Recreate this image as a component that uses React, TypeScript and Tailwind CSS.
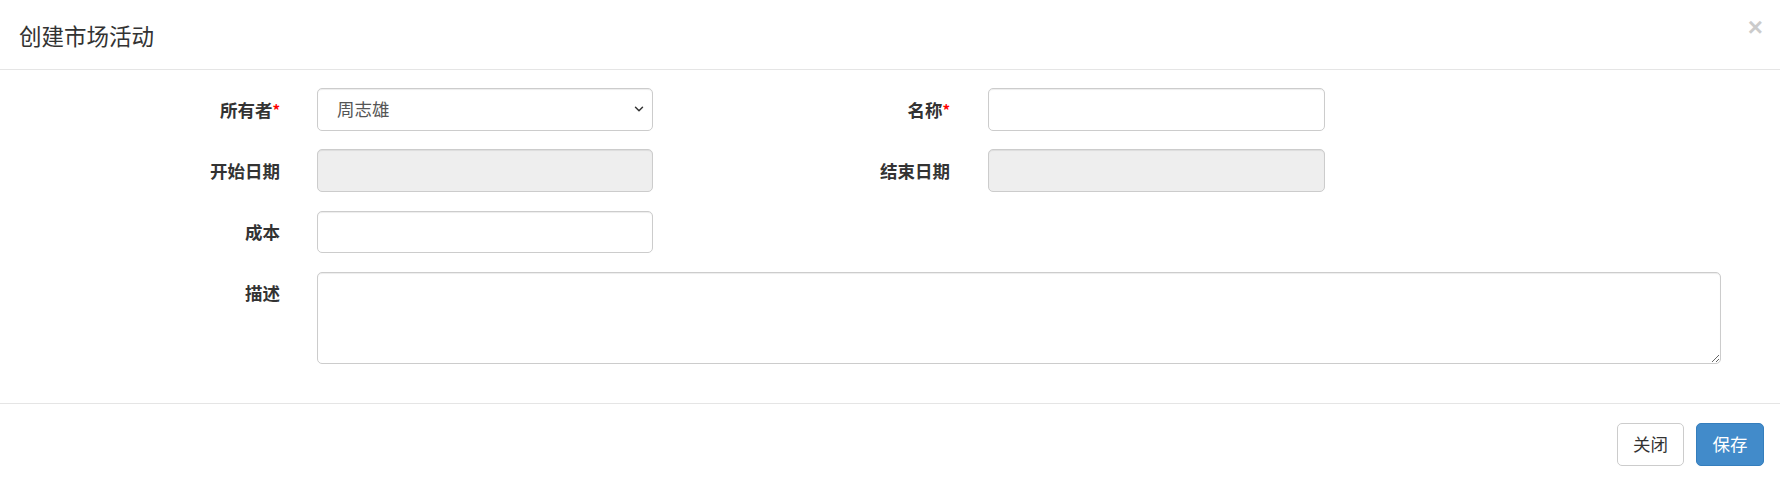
import { ChevronDown } from "lucide-react";

const font = "font-['Microsoft_YaHei','Noto_Sans_CJK_SC',sans-serif]";

const inputCls =
  "h-[42.5px] rounded-[5px] border border-[#ccc] bg-white px-[15px] text-[17.5px] text-[#555] shadow-[inset_0_1px_1px_rgba(0,0,0,0.075)] outline-none";

const Label = ({ text, required, width }: { text: string; required?: boolean; width: string }) => (
  <label className={`${width} block shrink-0 text-right text-[17.5px] font-bold leading-[25px] text-[#333]`}>
    {text}
    {required && <span className="text-[15px] text-[#f00] align-top">*</span>}
  </label>
);

const App = () => {
  return (
    <div className={`${font} min-h-screen w-full bg-white text-[#333]`}>
      {/* Header */}
      <div className="relative flex h-[70px] items-center border-b border-[#e5e5e5] px-[19px]">
        <h4 className="text-[22.5px] font-normal leading-[32px] text-[#333]">创建市场活动</h4>
        <button className="absolute right-[17px] top-[14px] text-[26px] font-bold leading-none text-[#000] opacity-20 font-['Liberation_Sans',sans-serif]">
          ×
        </button>
      </div>

      {/* Body */}
      <div className="pb-[39px] pt-[18px]">
        <form className="flex flex-col gap-[18.75px]">
          <div className="flex items-center">
            <Label text="所有者" required width="w-[280px]" />
            <div className="relative ml-[37px] w-[336px]">
              <select className={`${inputCls} w-full appearance-none !pl-[19px]`} defaultValue="zzx">
                <option value="zzx">周志雄</option>
              </select>
              <ChevronDown
                size={14}
                strokeWidth={2.5}
                className="pointer-events-none absolute right-[7px] top-[14px] text-[#333]"
              />
            </div>
            <Label text="名称" required width="w-[297px]" />
            <input className={`${inputCls} ml-[38px] w-[337px]`} />
          </div>

          <div className="flex items-center">
            <Label text="开始日期" width="w-[280px]" />
            <input disabled className={`${inputCls} ml-[37px] w-[336px] !bg-[#eee]`} />
            <Label text="结束日期" width="w-[297px]" />
            <input disabled className={`${inputCls} ml-[38px] w-[337px] !bg-[#eee]`} />
          </div>

          <div className="flex items-center">
            <Label text="成本" width="w-[280px]" />
            <input className={`${inputCls} ml-[37px] w-[336px]`} />
          </div>

          <div className="flex items-start">
            <div className="w-[280px] shrink-0 pt-[8px]">
              <Label text="描述" width="w-full" />
            </div>
            <textarea
              rows={3}
              className="ml-[37px] h-[92px] w-[1404px] rounded-[5px] border border-[#ccc] bg-white px-[15px] py-[8px] text-[17.5px] text-[#555] shadow-[inset_0_1px_1px_rgba(0,0,0,0.075)] outline-none"
            />
          </div>
        </form>
      </div>

      {/* Footer */}
      <div className="flex justify-end gap-[12px] border-t border-[#e5e5e5] pr-[16px] pt-[19.5px] pb-[19px]">
        <button className="h-[42.5px] w-[67px] rounded-[5px] border border-[#ccc] bg-white text-[17.5px] text-[#333]">
          关闭
        </button>
        <button className="h-[42.5px] w-[68px] rounded-[5px] border border-[#357ebd] bg-[#428bca] text-[17.5px] text-white">
          保存
        </button>
      </div>
    </div>
  );
};

export default App;
